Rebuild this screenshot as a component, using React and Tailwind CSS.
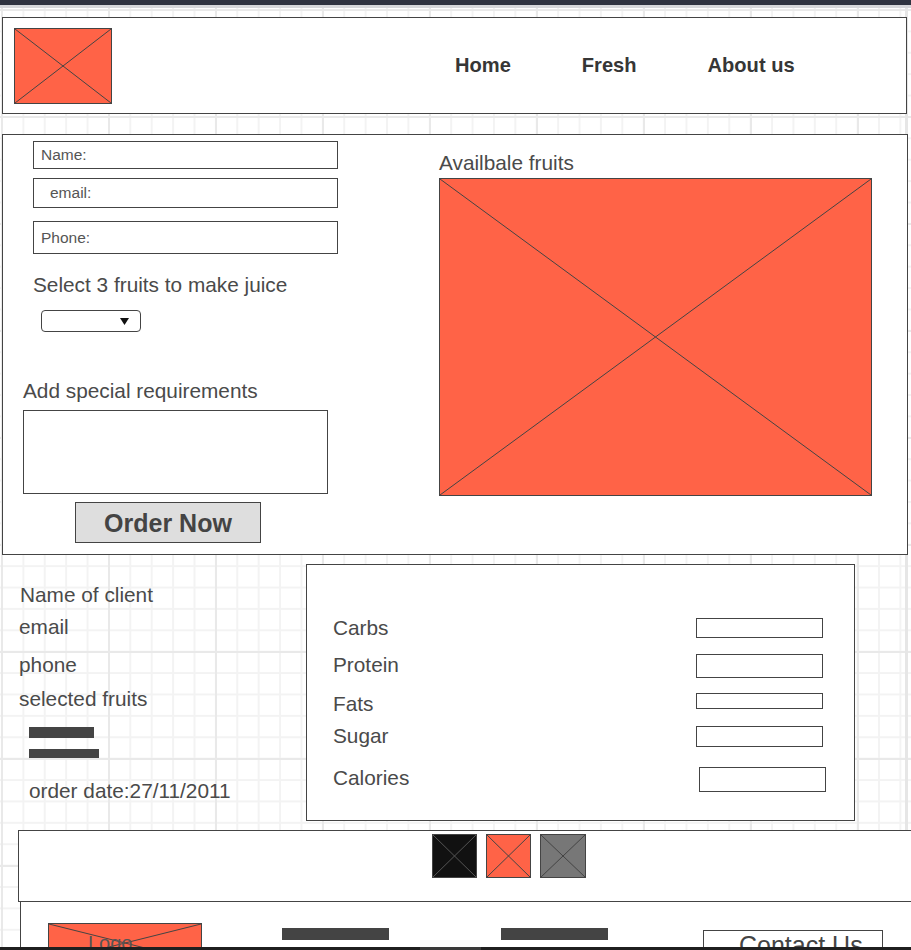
import React from "react";

// image placeholder: filled box with a cross from corner to corner
function Placeholder({ className = "", stroke = "#444", children }) {
  return (
    <div className={`relative overflow-hidden border border-[#444] ${className}`}>
      <svg className="absolute inset-0 h-full w-full" viewBox="0 0 100 100" preserveAspectRatio="none">
        <line x1="0" y1="0" x2="100" y2="100" stroke={stroke} strokeWidth="1" vectorEffect="non-scaling-stroke" />
        <line x1="100" y1="0" x2="0" y2="100" stroke={stroke} strokeWidth="1" vectorEffect="non-scaling-stroke" />
      </svg>
      {children}
    </div>
  );
}

function Field({ label, className }) {
  return (
    <div className={`flex w-[305px] items-center border border-[#444] bg-white text-[15.5px] text-[#555] ${className}`}>
      {label}
    </div>
  );
}

function NutriRow({ label, rowClass, boxClass }) {
  return (
    <div className={`flex items-start justify-between pl-[26px] ${rowClass}`}>
      <span className="text-[20.8px] leading-[24px]">{label}</span>
      <div className={`w-[127px] border border-[#444] bg-white ${boxClass}`} />
    </div>
  );
}

export default function App() {
  return (
    <div className="relative isolate h-[950px] w-full overflow-hidden bg-white font-['Liberation_Sans',Arial,sans-serif] text-[#4a4a4a] [background-image:linear-gradient(to_right,#e9e9e9_1.5px,transparent_1.5px),linear-gradient(to_bottom,#e9e9e9_1.5px,transparent_1.5px),linear-gradient(to_right,#f3f3f3_1.5px,transparent_1.5px),linear-gradient(to_bottom,#f3f3f3_1.5px,transparent_1.5px)] [background-size:107px_107px,107px_107px,21.4px_21.4px,21.4px_21.4px] [background-position:1px_9px]">
      <div className="absolute bottom-0 right-[3px] top-[8px] -z-10 w-[3px] bg-[#e6e6e6]" />

      {/* window chrome */}
      <div className="h-[5px] bg-[#2f3340]" />
      <div className="h-[3px] bg-[#d6d7da]" />

      {/* Header */}
      <header className="ml-[2px] mt-[9px] flex h-[97px] w-[905px] items-start border border-[#444] bg-white">
        <Placeholder className="ml-[11px] mt-[10px] h-[76px] w-[98px] bg-[#ff6347]" />
        <nav className="ml-[343px] mt-[35px] flex gap-[71px] text-[20.1px] font-bold leading-[24px] text-[#363636]">
          <span>Home</span>
          <span>Fresh</span>
          <span>About us</span>
        </nav>
      </header>

      {/* Order form */}
      <section className="ml-[2px] mt-[20px] flex h-[421px] w-[906px] border border-[#444] bg-white">
        <div className="flex w-[436px] flex-col items-start">
          <Field label="Name:" className="ml-[30px] mt-[6px] h-[28px] pl-[7px]" />
          <Field label="email:" className="ml-[30px] mt-[9px] h-[30px] pl-[16px]" />
          <Field label="Phone:" className="ml-[30px] mt-[13px] h-[33px] pl-[7px]" />
          <p className="ml-[30px] mt-[19px] text-[20.8px] leading-[24px]">Select 3 fruits to make juice</p>
          <div className="ml-[38px] mt-[13px] flex h-[22px] w-[100px] items-center justify-end rounded-[4px] border border-[#444] bg-white pr-[11px]">
            <svg width="9" height="7" viewBox="0 0 9 7">
              <polygon points="0,0 9,0 4.5,7" fill="#111" />
            </svg>
          </div>
          <p className="ml-[20px] mt-[47px] text-[20.8px] leading-[24px]">Add special requirements</p>
          <div className="ml-[20px] mt-[7px] h-[84px] w-[305px] border border-[#444] bg-white" />
          <button className="ml-[72px] mt-[8px] h-[41px] w-[186px] border border-[#444] bg-[#dedede] text-[25px] font-bold leading-[28px] text-[#444]">
            Order Now
          </button>
        </div>
        <div className="flex flex-col">
          <p className="mt-[16px] text-[20.8px] leading-[24px]">Availbale fruits</p>
          <Placeholder className="mt-[3px] h-[318px] w-[433px] bg-[#ff6347]" />
        </div>
      </section>

      {/* Summary */}
      <div className="flex h-[266px]">
        <div className="flex w-[306px] flex-col items-start text-[20.8px] leading-[24px]">
          <p className="ml-[20px] mt-[28px]">Name of client</p>
          <p className="ml-[19px] mt-[8px]">email</p>
          <p className="ml-[19px] mt-[14px]">phone</p>
          <p className="ml-[19px] mt-[10px]">selected fruits</p>
          <div className="ml-[29px] mt-[16px] h-[11px] w-[65px] bg-[#444]" />
          <div className="ml-[29px] mt-[11px] h-[9px] w-[70px] bg-[#444]" />
          <p className="ml-[29px] mt-[21px]">order date:27/11/2011</p>
        </div>
        <div className="mt-[9px] flex h-[257px] w-[549px] flex-col border border-[#444] bg-white">
          <NutriRow label="Carbs" rowClass="mt-[51px] pr-[31px]" boxClass="mt-[2px] h-[20px]" />
          <NutriRow label="Protein" rowClass="mt-[13px] pr-[31px]" boxClass="mt-[1px] h-[24px]" />
          <NutriRow label="Fats" rowClass="mt-[14px] pr-[31px]" boxClass="mt-[1px] h-[16px]" />
          <NutriRow label="Sugar" rowClass="mt-[8px] pr-[31px]" boxClass="mt-[2px] h-[21px]" />
          <NutriRow label="Calories" rowClass="mt-[18px] pr-[28px]" boxClass="mt-[1px] h-[25px]" />
        </div>
      </div>

      {/* Swatches band */}
      <div className="ml-[18px] mt-[9px] flex h-[72px] w-[905px] items-start gap-[9px] border border-[#444] bg-white pl-[413px] pt-[3px]">
        <Placeholder className="h-[44px] w-[45px] bg-[#111]" stroke="#555" />
        <Placeholder className="h-[44px] w-[45px] bg-[#ff6347]" />
        <Placeholder className="h-[44px] w-[46px] bg-[#777]" />
      </div>

      {/* Footer */}
      <footer className="-mt-[1px] ml-[20px] flex h-[60px] w-[900px] items-start border-l border-t border-[#444] bg-white">
        <Placeholder className="ml-[27px] mt-[21px] h-[40px] w-[154px] bg-[#ff6347]">
          <span className="relative block pl-[39px] pt-[7px] text-[20px] leading-[24px] text-[#555]">Logo</span>
        </Placeholder>
        <div className="ml-[80px] mt-[26px] h-[12px] w-[107px] bg-[#444]" />
        <div className="ml-[112px] mt-[26px] h-[12px] w-[107px] bg-[#444]" />
        <div className="ml-[95px] mt-[28px] h-[30px] w-[180px] whitespace-nowrap border border-[#444] bg-white pl-[35px] text-[25px] leading-[28px] text-[#444]">
          Contact Us
        </div>
      </footer>

      {/* bottom chrome */}
      <div className="absolute bottom-0 left-0 h-[3px] w-full bg-[#1f1f1f]">
        <div className="absolute left-[420px] top-0 h-[3px] w-[61px] bg-[#3a3a3a]" />
      </div>
    </div>
  );
}
